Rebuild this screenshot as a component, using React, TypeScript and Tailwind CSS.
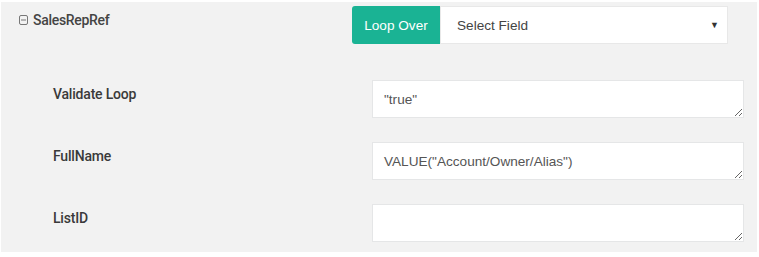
import React from "react";

const rows = [
  { label: "Validate Loop", value: '"true"' },
  { label: "FullName", value: 'VALUE("Account/Owner/Alias")' },
  { label: "ListID", value: "" },
];

const MinusBox = () => (
  <svg width="9" height="10" viewBox="0 0 9 10" className="shrink-0">
    <rect x="0.5" y="0.5" width="8" height="9" rx="1.5" fill="none" stroke="#777" strokeWidth="1" />
    <line x1="2" y1="5" x2="7" y2="5" stroke="#777" strokeWidth="1" />
  </svg>
);

const App = () => {
  return (
    <div className="w-[759px] h-[257px] bg-white pt-[2px] pl-[1px]">
      <div className="w-[756px] h-[250px] bg-[#f2f2f2] font-['Liberation_Sans',Arial,sans-serif]">
        {/* header */}
        <div className="flex pl-[18px] pt-[4px]">
          <div className="w-[333px] pt-[4px] flex items-center gap-[5px] h-[24px]">
            <MinusBox />
            <span className="font-['Roboto',sans-serif] font-medium text-[14px] text-[#444] tracking-[-0.3px]">
              SalesRepRef
            </span>
          </div>
          <div className="flex h-[38px]">
            <div className="w-[88px] bg-[#1ab394] text-white text-[13.6px] rounded-l-[3px] flex items-center justify-center pt-[2px]">
              Loop Over
            </div>
            <div className="w-[288px] bg-white border border-[#e8e8e8] flex items-center justify-between pl-[16px] pr-[8px] pt-[2px] text-[13.6px] text-[#444]">
              <span>Select Field</span>
              <span className="text-[9px] text-[#333]">▼</span>
            </div>
          </div>
        </div>

        {/* fields */}
        <div className="flex flex-col gap-[24px] pt-[36px] pl-[52px]">
          {rows.map((r) => (
            <div key={r.label} className="flex">
              <div className="w-[319px] pt-[5px] font-['Roboto',sans-serif] font-medium text-[14px] leading-[18px] text-[#3a3a3a] tracking-[-0.2px]">
                {r.label}
              </div>
              <textarea
                readOnly
                value={r.value}
                rows={1}
                className="w-[372px] h-[38px] bg-white border border-[#e5e6e7] px-[11px] pt-[9px] text-[13.6px] leading-[20px] text-[#555] outline-none"
              />
            </div>
          ))}
        </div>
      </div>
    </div>
  );
};

export default App;
